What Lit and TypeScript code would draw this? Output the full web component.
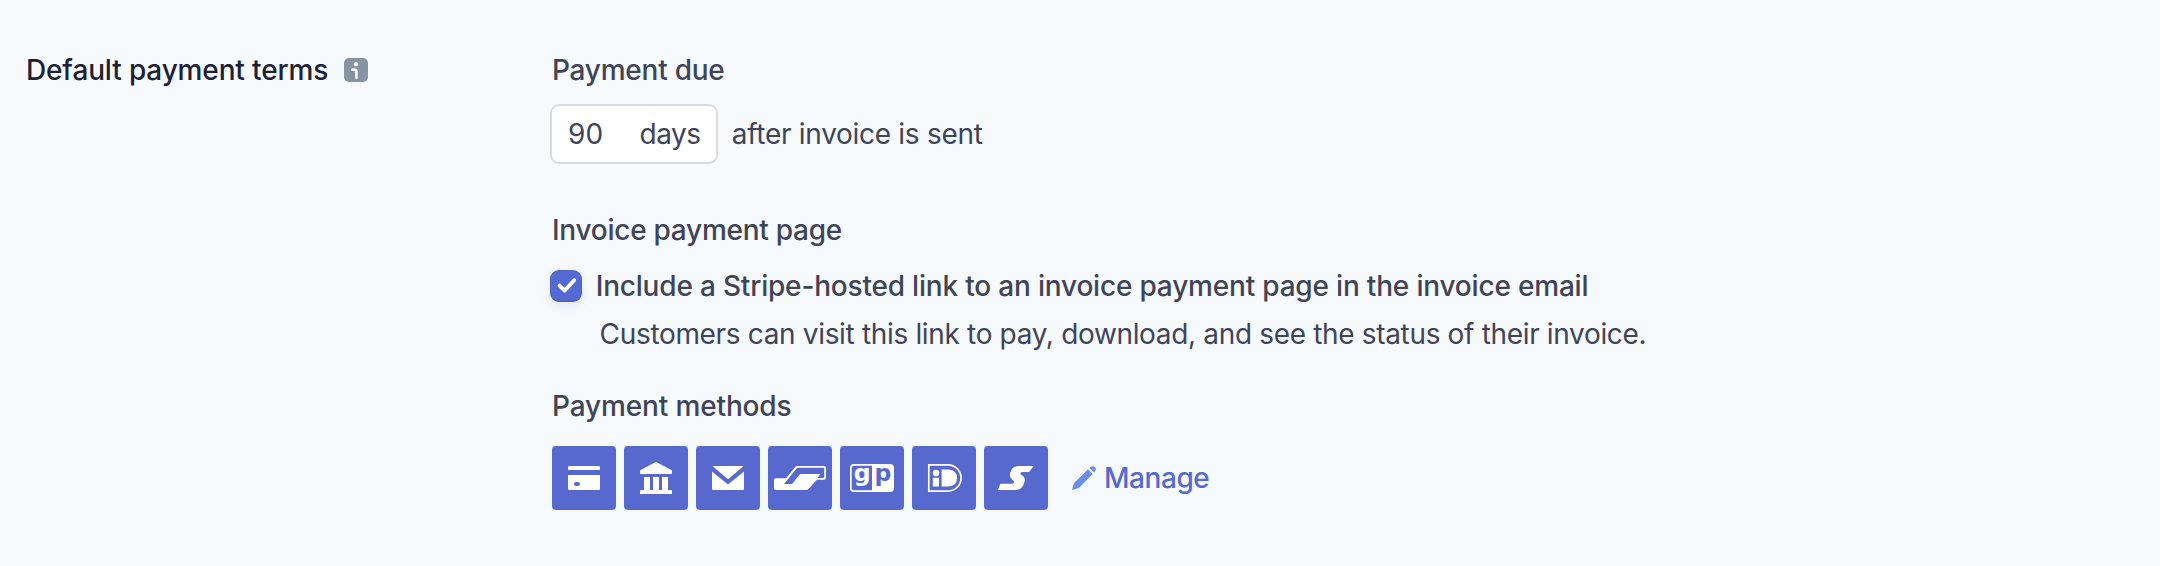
import { LitElement, html, css, svg } from "lit";
import { customElement } from "lit/decorators.js";

const methods = [
  {
    name: "Card",
    art: svg`<path d="M17.5 20h29Q48 20 48 21.5V24H16v-2.5Q16 20 17.5 20Z"/><path fill-rule="evenodd" d="M16 29h32v13.5q0 1.5-1.5 1.5h-29Q16 44 16 42.5ZM24 36a2 2 0 0 0 0 4h2a2 2 0 0 0 0-4Z"/>`,
  },
  {
    name: "Bank transfer",
    art: svg`<path d="M30.8 16.6q1.2-.8 2.4 0L47.3 24q.7.4.7 1.2V27q0 1-1 1H17q-1 0-1-1v-1.8q0-.8.7-1.2ZM20 31h6v13h3V31h6v13h3V31h6v13h3q1 0 1 1v3H16v-3q0-1 1-1h3Z"/>`,
  },
  {
    name: "Mail",
    art: svg`<path d="M16.4 20h31.2L33 32.6q-1 .8-2 0ZM16 25.5l14.8 12q1.2 1 2.4 0L48 25.500v17q0 1.500-1.500 1.500h-29Q16 44 16 42.500Z"/>`,
  },
  {
    name: "Bancontact",
    art: svg`<path fill-rule="evenodd" d="M8 32.3h10l9-11Q28 20 29.5 20H56q2 0 2 2v9.7q0 2-2 2h-7.3L41 42.5Q39.7 44 38 44H8q-2 0-2-2v-7.7q0-2 2-2ZM30 21.7q-.8 0-1.4.7L16 38h7q1 0 1.7-.8l6.3-8q1-1.2 2.2-1.2h19.1L49.6 32H55.4q.8 0 .8-.8v-8.7q0-.8-.8-.8Z"/>`,
  },
  {
    name: "giropay",
    art: svg`<path fill-rule="evenodd" d="M14 18h36q4 0 4 4v20q0 4-4 4H14q-4 0-4-4V22q0-4 4-4Zm.3 1.700q-2.600 0-2.600 2.600v19.400q0 2.600 2.600 2.600H32V19.700Z"/><text class="glyph" x="13.8" y="34.5">g</text><text class="glyph inverse" x="34.4" y="34.5">p</text>`,
  },
  {
    name: "iDEAL",
    art: svg`<path fill="none" stroke="#fff" stroke-width="1.7" d="M16.8 18.9H36a13.1 13.1 0 0 1 0 26.2H16.8Z"/><circle cx="24" cy="27" r="3.2"/><path d="M20.8 31.7h6.2V40.6h-6.2ZM29.6 23.4h6.9q8.5.6 8.5 8.6t-8.500 8.600h-6.900Z"/>`,
  },
  {
    name: "Sofort",
    art: svg`<path d="M49.7 20L45.200 26H39q-2.300 0-2.600 1.400-.1.9 1.200 1.700Q41.500 31 40.600 35.500 39 44 31 44H14l2.300-6.200h11.200q2.200 0 2.600-1.500.2-1-1.200-2Q25.200 31.500 26 27.500 27.500 20 35 20Z"/>`,
  },
];

@customElement("app-root")
export class AppRoot extends LitElement {
  static styles = css`
    :host {
      display: flex;
      box-sizing: border-box;
      height: 566px;
      padding: 50px 26px 0;
      background: #f6fafd;
      color: #3f4459;
      font: 500 28px/40px Inter, sans-serif;
      white-space: nowrap;
    }
    svg { display: block; flex: none; }
    .side {
      display: flex;
      align-items: flex-start;
      flex: 0 0 526px;
      color: #1c2138;
      letter-spacing: -0.14px;
    }
    .info { margin: 8px 0 0 15.7px; }
    .regular { font-weight: 400; letter-spacing: -0.29px; }
    .due { letter-spacing: -0.24px; }
    .term { display: flex; align-items: center; margin: 14px 0 46px -2px; }
    .field {
      display: flex;
      justify-content: space-between;
      align-items: center;
      box-sizing: border-box;
      width: 168px;
      height: 60px;
      margin-right: 13.8px;
      padding: 0 15.5px 0 16px;
      border: 2px solid #d9dce1;
      border-radius: 9px;
      background: #fff;
    }
    .value { letter-spacing: 0.2px; }
    .unit { letter-spacing: -0.5px; }
    .page { letter-spacing: -0.26px; }
    .option { display: flex; align-items: center; margin: 16px 0 8px -2px; letter-spacing: -0.19px; }
    .check {
      width: 32px;
      height: 32px;
      margin-right: 13.7px;
      border-radius: 9px;
      background: #5469d4;
      box-shadow: inset 0 0 0 1px rgba(60, 66, 87, 0.12), inset 0 -2px 0 rgba(60, 66, 87, 0.12), 0 4px 10px rgba(60, 66, 87, 0.1);
    }
    .help { padding-left: 47.6px; letter-spacing: -0.335px; }
    .methods { margin-top: 32px; letter-spacing: -0.14px; }
    .tiles { display: flex; gap: 8px; align-items: center; margin-top: 20px; }
    .tile { width: 64px; height: 64px; border-radius: 4px; background: #5768cf; fill: #fff; }
    .glyph { font: 700 23.5px "DejaVu Sans", sans-serif; letter-spacing: 0; }
    .inverse { fill: #5768cf; }
    .manage { display: flex; align-items: center; gap: 8px; margin-left: 16px; color: #5469d4; letter-spacing: -0.45px; }
  `;

  render() {
    return html`
      <div class="side">
        <span>Default payment terms</span>
        <svg class="info" width="24" height="24" viewBox="0 0 24 24">
          <rect width="24" height="24" rx="5" fill="#8792a2" />
          <circle cx="12" cy="6.1" r="2.2" fill="#fff" />
          <path d="M8.4 11.8h3q1 0 1 1v7" fill="none" stroke="#fff" stroke-width="2.6" stroke-linecap="round" />
        </svg>
      </div>
      <div class="main">
        <div class="due">Payment due</div>
        <div class="term regular">
          <div class="field"><span class="value">90</span><span class="unit">days</span></div>
          <span>after invoice is sent</span>
        </div>
        <div class="page">Invoice payment page</div>
        <div class="option">
          <svg class="check" viewBox="0 0 32 32">
            <path d="M9.6 15.6l5 5L24.2 10.2" fill="none" stroke="#fff" stroke-width="3.8" stroke-linecap="round" stroke-linejoin="round" />
          </svg>
          <span>Include a Stripe-hosted link to an invoice payment page in the invoice email</span>
        </div>
        <div class="regular help">Customers can visit this link to pay, download, and see the status of their invoice.</div>
        <div class="methods">Payment methods</div>
        <div class="tiles">
          ${methods.map((m) => html`<svg class="tile" viewBox="0 0 64 64" aria-label=${m.name}>${m.art}</svg>`)}
          <div class="manage">
            <svg width="24" height="24" viewBox="0 0 24 24" fill="#6c8eef">
              <path d="M16 3.3l4.700 4.700L7.300 21.400q-.6.6-1.400.8L0 24l1.600-5.800q.2-.8.8-1.400ZM17.500 1.900 18.600.8Q20 0 21 .2q2.600.4 3 3 .1.9-.8 1.800L22.100 6.400Z" />
            </svg>
            <span>Manage</span>
          </div>
        </div>
      </div>
    `;
  }
}
